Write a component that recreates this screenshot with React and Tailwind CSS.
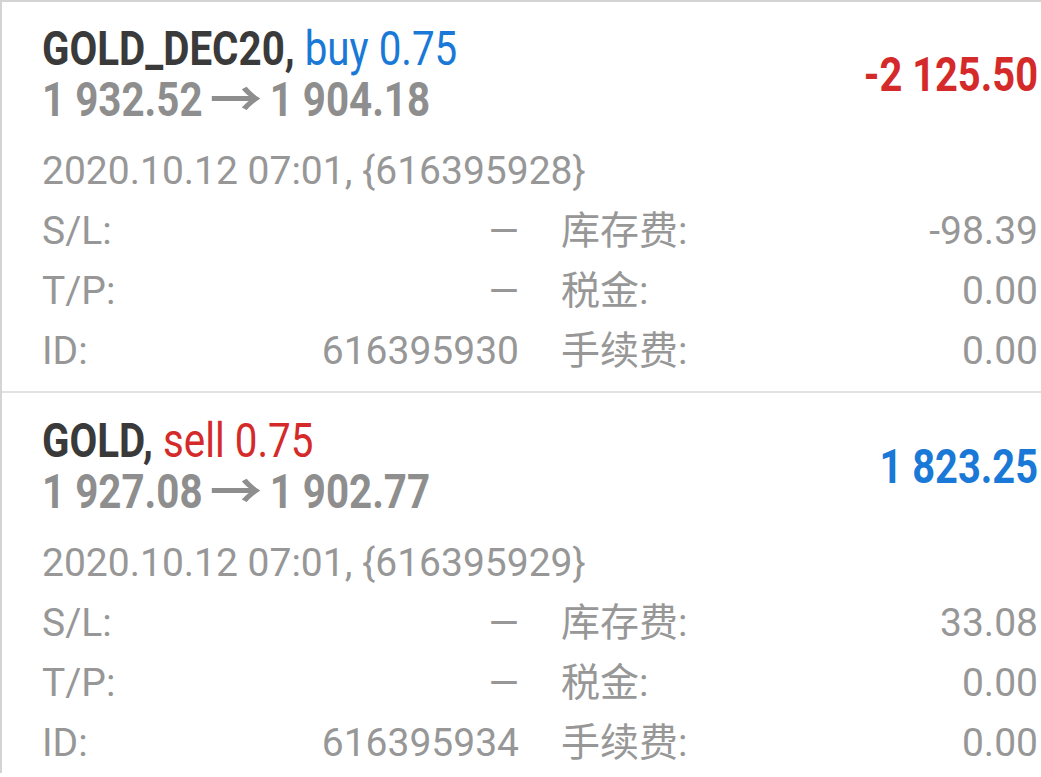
const positions = [
  {
    symbol: "GOLD_DEC20,",
    side: "buy 0.75",
    sideColor: "text-[#1a78d6]",
    open: "1 932.52",
    close: "1 904.18",
    profit: "-2 125.50",
    profitColor: "text-[#d42a2a]",
    time: "2020.10.12 07:01, {616395928}",
    id: "616395930",
    swap: "-98.39",
    tax: "0.00",
    fee: "0.00",
  },
  {
    symbol: "GOLD,",
    side: "sell 0.75",
    sideColor: "text-[#d42a2a]",
    open: "1 927.08",
    close: "1 902.77",
    profit: "1 823.25",
    profitColor: "text-[#1a78d6]",
    time: "2020.10.12 07:01, {616395929}",
    id: "616395934",
    swap: "33.08",
    tax: "0.00",
    fee: "0.00",
  },
];

function Row({ label, value, cnLabel, cnValue })
{
  return (
    <div className="flex h-[60px] leading-[60px]">
      <div className="w-[477px] flex justify-between">
        <span>{label}</span>
        <span>{value}</span>
      </div>
      <span className="ml-[42px]">{cnLabel}</span>
      <span className="flex-1 text-right">{cnValue}</span>
    </div>
  );
}

function PositionCard({ p, first })
{
  return (
    <div className={"pl-[40px] pr-[3px] " + (first ? "pt-[21px] pb-[10px] border-b-2 border-[#e2e2e2]" : "pt-[22px]")}>
      <div className="flex items-center justify-between">
        <div className="origin-left scale-x-[0.84] text-[48px] leading-[51px] font-bold whitespace-nowrap">
          <div>
            <span className="text-[#3a3a3a]">{p.symbol}</span>{" "}
            <span className={"font-normal " + p.sideColor}>{p.side}</span>
          </div>
          <div className="text-[#8e8e8e]">
            {p.open}{" "}
            <span className="inline-block mx-[4px] scale-x-[1.3]">→</span>{" "}
            {p.close}
          </div>
        </div>
        <div className={"origin-right scale-x-[0.83] text-[48px] font-bold mt-[2px] " + p.profitColor}>{p.profit}</div>
      </div>
      <div className="mt-[16px] text-[39px] text-[#979797]">
        <div className="h-[60px] leading-[60px]">{p.time}</div>
        <Row label="S/L:" value="—" cnLabel="库存费:" cnValue={p.swap} />
        <Row label="T/P:" value="—" cnLabel="税金:" cnValue={p.tax} />
        <Row label="ID:" value={p.id} cnLabel="手续费:" cnValue={p.fee} />
      </div>
    </div>
  );
}

export default function App()
{
  return (
    <div className="w-[1041px] h-[777px] overflow-hidden bg-white font-['Roboto','Noto_Sans_CJK_SC',sans-serif]">
      <div className="border-l-2 border-t-2 border-[#d4d4d4]">
        {positions.map((p, i) => (
          <PositionCard key={i} p={p} first={i === 0} />
        ))}
      </div>
    </div>
  );
}
